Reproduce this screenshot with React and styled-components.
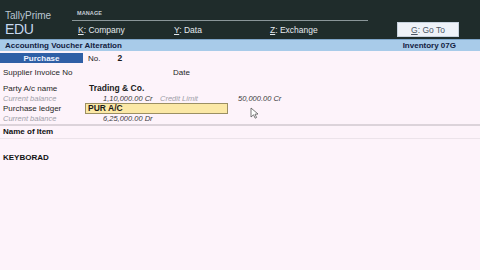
import React from 'react';
import styled, { createGlobalStyle } from 'styled-components';

const GlobalStyle = createGlobalStyle`
  html, body { margin: 0; padding: 0; }
  body {
    width: 480px;
    height: 270px;
    overflow: hidden;
    background: #fdf3fa;
    font-family: "Liberation Sans", Arial, sans-serif;
  }
`;

const menu = [
    { key: 'K', label: 'Company' },
    { key: 'Y', label: 'Data' },
    { key: 'Z', label: 'Exchange' },
];

export default function App() {
    return (
        <Page>
            <GlobalStyle />
            <Header>
                <Brand>
                    <span className='name'>TallyPrime</span>
                    <span className='edu'>EDU</span>
                </Brand>
                <Manage>
                    <div className='m-label'>MANAGE</div>
                    <MenuRow>
                        {menu.map(x =>
                            <MenuItem key={x.key}><u>{x.key}</u>: {x.label}</MenuItem>
                        )}
                    </MenuRow>
                </Manage>
                <GoTo><u>G</u>: Go To</GoTo>
            </Header>

            <TitleBar>
                <span>Accounting Voucher Alteration</span>
                <span className='company'>Inventory 07G</span>
            </TitleBar>

            <Body>
                <VoucherRow>
                    <VoucherType>Purchase</VoucherType>
                    <span>No.</span>
                    <b className='num'>2</b>
                </VoucherRow>

                <Row $top={4}>
                    <Label $w={170}>Supplier Invoice No</Label>
                    <Label>Date</Label>
                </Row>

                <Row $top={6}>
                    <Label $w={86}>Party A/c name</Label>
                    <Value $bold>Trading &amp; Co.</Value>
                </Row>
                <Row $top={0}>
                    <Muted $w={100}>Current balance</Muted>
                    <Amount $w={57}>1,10,000.00 Cr</Amount>
                    <Muted $w={78}>Credit Limit</Muted>
                    <Amount>50,000.00 Cr</Amount>
                </Row>
                <Row $top={0}>
                    <Label $w={82}>Purchase ledger</Label>
                    <LedgerInput>PUR A/C</LedgerInput>
                    <Cursor width='9' height='12' viewBox='0 0 9 12'>
                        <path d='M1 1 L1 10 L3.5 7.8 L5.2 11.2 L6.6 10.5 L5 7.2 L8 7 Z' fill='#fff' stroke='#555' strokeWidth='0.8' strokeLinejoin='round' />
                    </Cursor>
                </Row>
                <Row $top={0}>
                    <Muted $w={100}>Current balance</Muted>
                    <Amount>6,25,000.00 Dr</Amount>
                </Row>

                <ItemHead>Name of Item</ItemHead>

                <ItemLine>KEYBORAD</ItemLine>
            </Body>
        </Page>
    );
}

const Page = styled.div`
width: 480px;
height: 270px;
display: flex;
flex-direction: column;
background: #fdf3fa;
`;

const Header = styled.header`
height: 39px;
display: flex;
align-items: stretch;
background: #1f2c2b;
color: #dfe6ea;
`;

const Brand = styled.div`
width: 72px;
display: flex;
flex-direction: column;
padding: 10px 0 0 5px;
box-sizing: border-box;

.name {
    font-size: 10px;
    color: #b9c6d2;
    line-height: 11px;
}

.edu {
    font-size: 14px;
    color: #c7d9ef;
    line-height: 16px;
    letter-spacing: -0.4px;
}
`;

const Manage = styled.div`
width: 296px;
display: flex;
flex-direction: column;

.m-label {
    font-size: 5.5px;
    font-weight: bold;
    color: #c4ccd4;
    padding: 10px 0 0 5px;
    height: 10px;
    border-bottom: 1px solid #8a9699;
    letter-spacing: 0.1px;
}
`;

const MenuRow = styled.div`
display: flex;
padding: 4px 0 0 6px;
`;

const MenuItem = styled.span`
width: 96px;
font-size: 8.5px;
color: #e4e9ee;

u {
    text-underline-offset: 1px;
}
`;

const GoTo = styled.div`
margin: 22px 0 0 29px;
width: 62px;
height: 15px;
box-sizing: border-box;
border: 1px solid #c7d2de;
background: #eef2f8;
color: #4b5563;
font-size: 8.5px;
display: flex;
align-items: center;
justify-content: center;
`;

const TitleBar = styled.div`
height: 11px;
background: #a8cbe9;
display: flex;
justify-content: space-between;
align-items: center;
padding: 0 24px 0 5px;
font-size: 8px;
font-weight: bold;
color: #13213f;
border-top: 1px solid #7da4c8;
`;

const Body = styled.main`
flex: 1;
display: flex;
flex-direction: column;
font-size: 8px;
color: #1b1b1b;
`;

const VoucherRow = styled.div`
display: flex;
align-items: center;
margin-top: 2px;
height: 10px;
gap: 5px;

.num {
    margin-left: 12px;
    font-size: 8.5px;
}
`;

const VoucherType = styled.div`
width: 83px;
height: 10px;
background: #2f5fa6;
color: #f0f4ff;
font-weight: bold;
font-size: 8px;
display: flex;
align-items: center;
justify-content: center;
`;

const Row = styled.div`
display: flex;
align-items: center;
height: 10px;
margin-top: ${p => p.$top}px;
padding-left: 3px;
`;

const Label = styled.span`
width: ${p => p.$w ? p.$w + 'px' : 'auto'};
flex: none;
font-size: 8px;
color: #1f1f1f;
`;

const Value = styled.span`
font-weight: ${p => p.$bold ? 'bold' : 'normal'};
font-size: 8.5px;
`;

const Muted = styled.span`
width: ${p => p.$w ? p.$w + 'px' : 'auto'};
flex: none;
font-size: 7.5px;
font-style: italic;
color: #a0a0a8;
`;

const Amount = styled.span`
width: ${p => p.$w ? p.$w + 'px' : 'auto'};
flex: none;
font-size: 7.5px;
font-style: italic;
color: #3a3a3a;
`;

const LedgerInput = styled.div`
width: 143px;
height: 11px;
box-sizing: border-box;
background: #fbe8a6;
border: 1px solid #9b8f63;
font-weight: bold;
font-size: 8.5px;
padding-left: 2px;
display: flex;
align-items: center;
`;

const Cursor = styled.svg`
align-self: flex-start;
margin: 4px 0 0 22px;
`;

const ItemHead = styled.div`
margin-top: 1px;
border-top: 2px solid #dcd3da;
border-bottom: 1px solid #ece3ea;
padding: 1px 3px;
height: 10px;
font-size: 8px;
font-weight: bold;
color: #111;
`;

const ItemLine = styled.div`
margin-top: 14px;
padding-left: 3px;
font-size: 8px;
font-weight: bold;
color: #111;
`;
